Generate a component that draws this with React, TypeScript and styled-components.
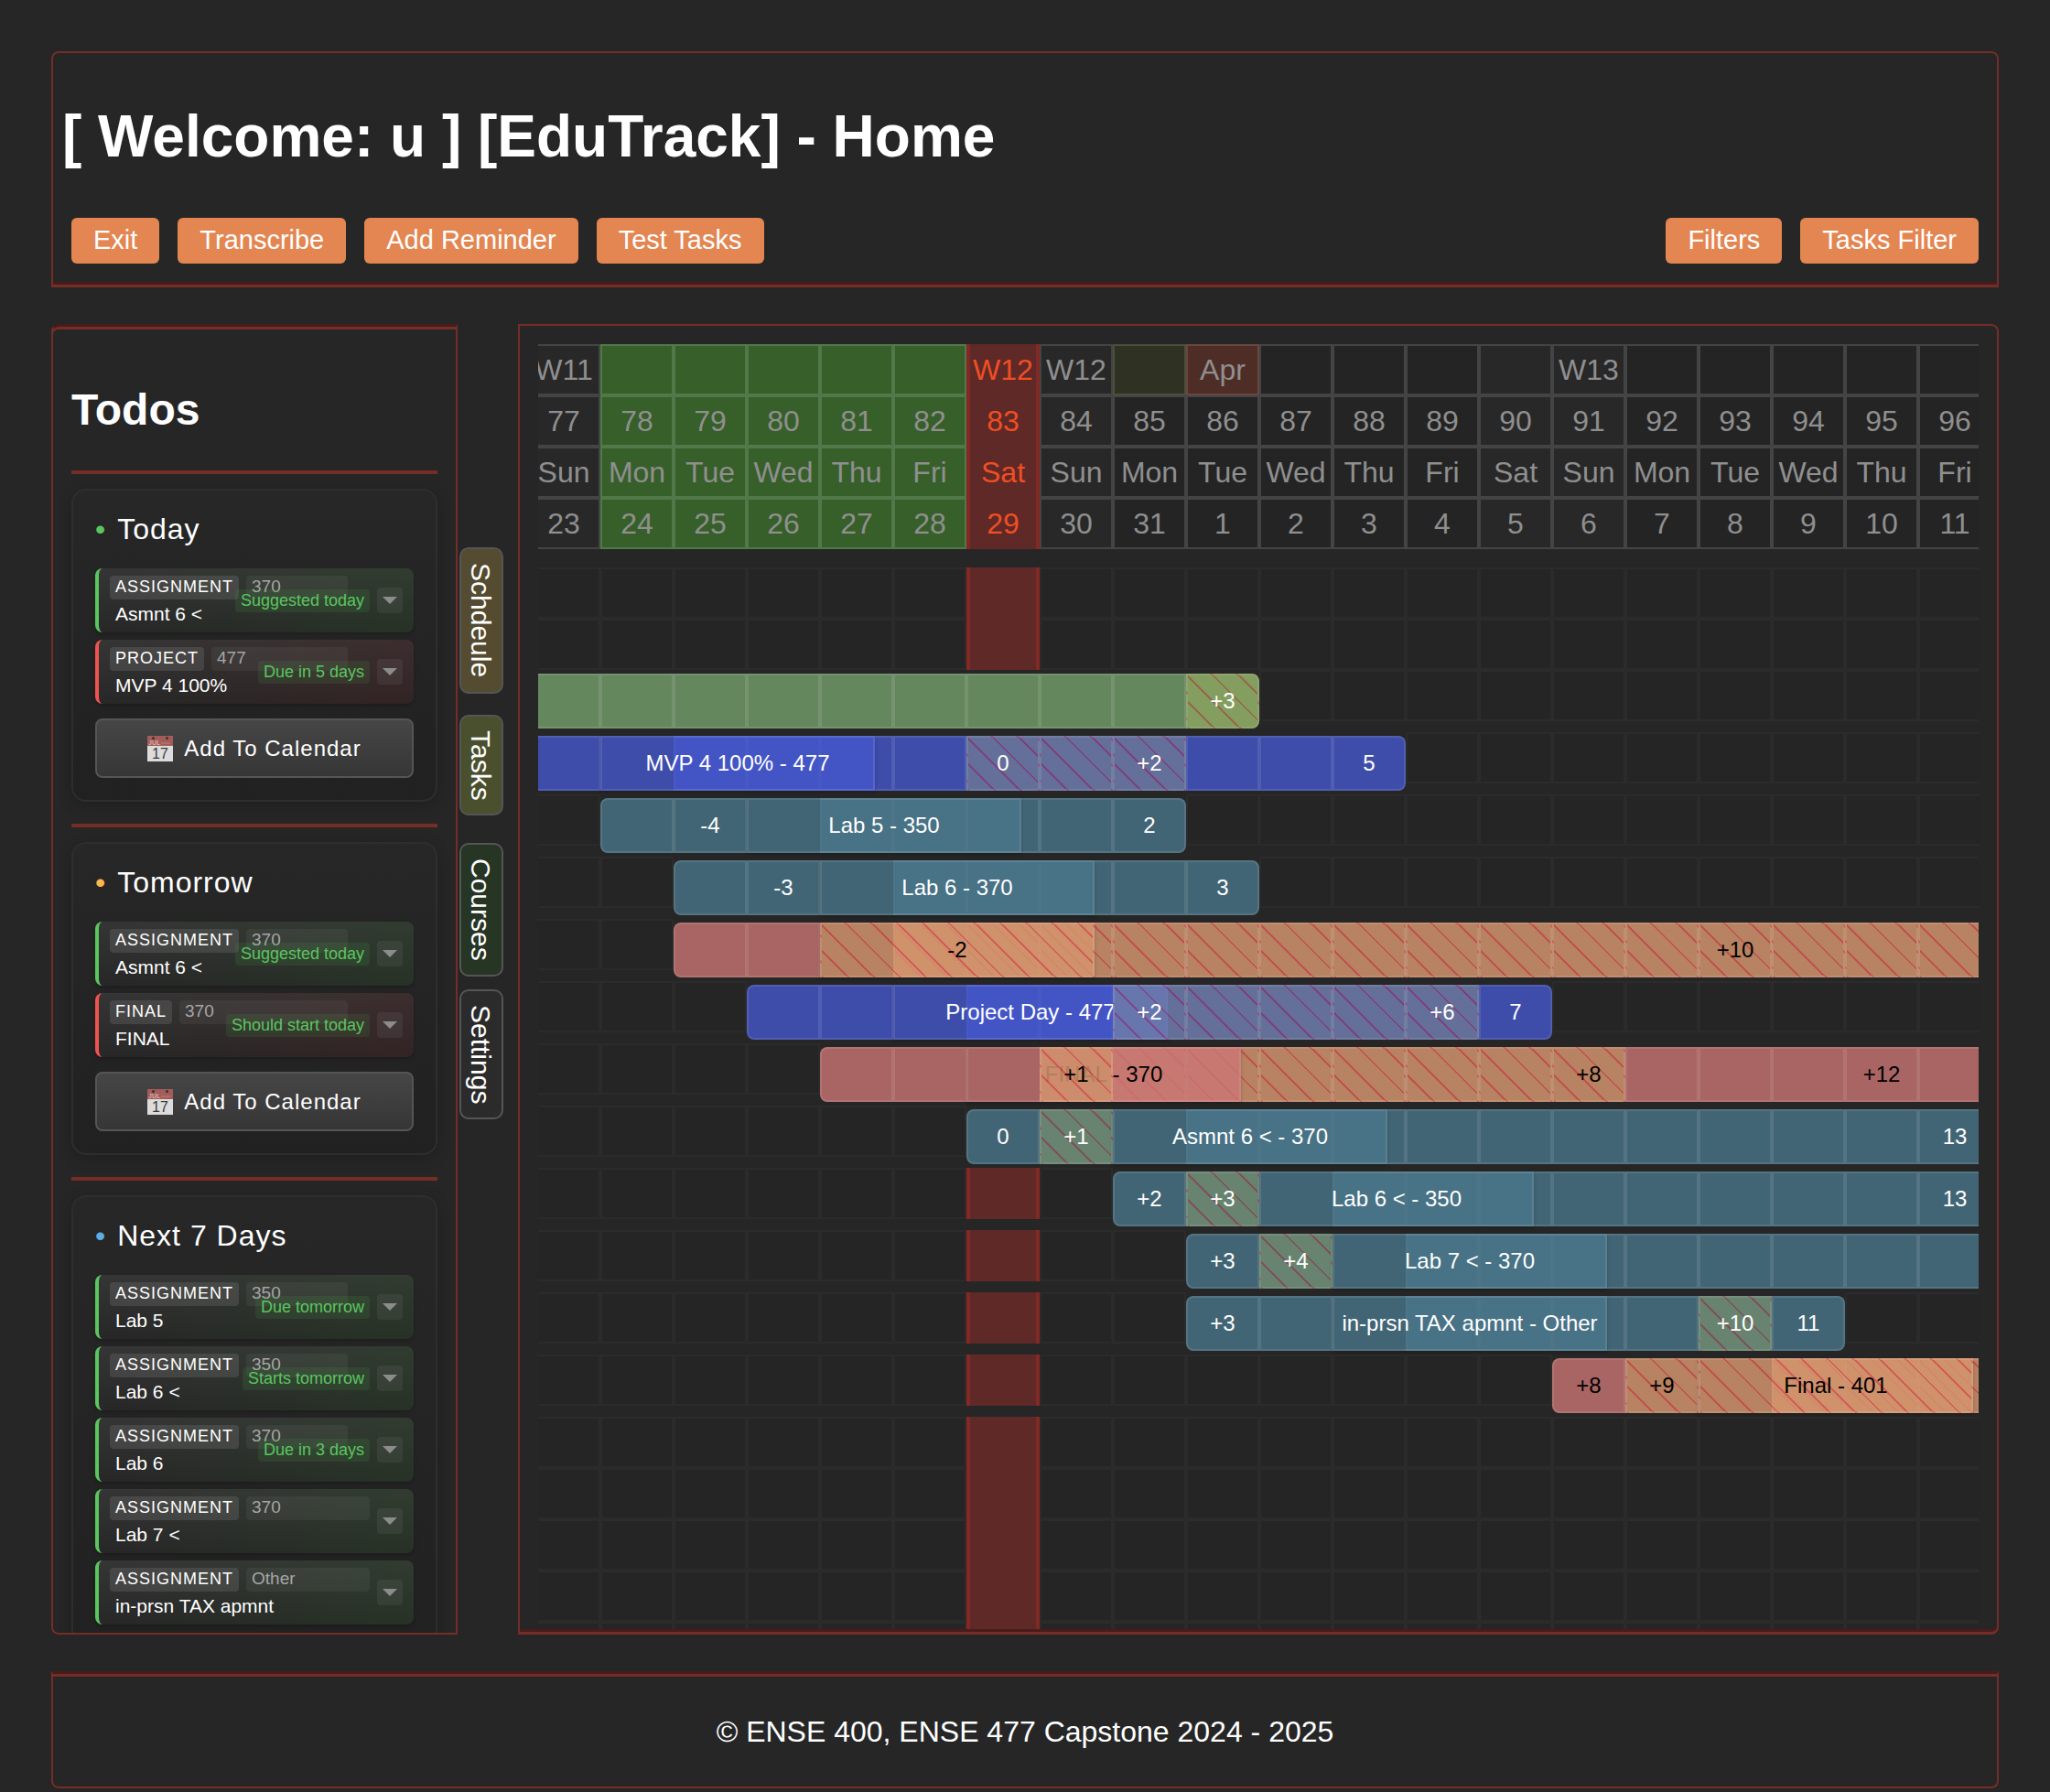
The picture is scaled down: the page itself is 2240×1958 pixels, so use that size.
import React from "react";
import styled, { createGlobalStyle, css } from "styled-components";

const RED = "#752d28";
const DARK_RED = "#471c1a";
const FONT = '"Liberation Sans", Arial, sans-serif';
const COLUMNS = 20;

const GlobalStyle = createGlobalStyle`
  *, *::before, *::after { box-sizing: border-box; }
  html, body { margin: 0; background: #262626; }
  body { color: #fff; font-family: ${FONT}; font-size: 32px; }
  button { font-family: inherit; color: inherit; cursor: pointer; }
`;

/* ---------- page frame ---------- */

/* Two-tone grooved edges: dark on the upper half, red on the lower half. */
const grooveTop = css`
  border-top: 3px solid ${DARK_RED};
  box-shadow: inset 0 3px 0 ${RED};
`;

const grooveBottom = css`
  border-bottom: 3px solid ${RED};
  box-shadow: inset 0 -3px 0 ${DARK_RED};
`;

const Page = styled.div`
  display: flex;
  flex-direction: column;
  gap: 40px;
  height: 100vh;
  padding: 56px 56px 4px;
`;

const Header = styled.header`
  padding: 0 20px 23px;
  border: 2px solid ${RED};
  border-radius: 8px 8px 0 0;
  ${grooveBottom}
`;

const Title = styled.h1`
  margin: 54px -10px 52px;
  font-size: 64px;
  line-height: 74px;
`;

const Toolbar = styled.nav`
  display: flex;
  justify-content: space-between;
`;

const ButtonGroup = styled.div`
  display: flex;
  gap: 20px;
`;

const ToolButton = styled.button`
  padding: 8px 24px 10px;
  border: 0;
  border-radius: 6px;
  background: #e38652;
  font-size: 29px;
  line-height: 32px;
`;

const Workspace = styled.div`
  display: flex;
  flex: 1;
  min-height: 0;
`;

const Footer = styled.footer`
  padding: 45px 20px 42px;
  border: 2px solid ${RED};
  border-radius: 0 0 8px 8px;
  ${grooveTop}
  font-size: 32px;
  line-height: 36px;
  text-align: center;
`;

/* ---------- todos ---------- */

const Sidebar = styled.aside`
  width: 444px;
  flex: none;
  overflow: hidden;
  padding: 3px 20px 0;
  border: 2px solid ${RED};
  border-radius: 8px 0 0 8px;
  ${grooveTop}
`;

const SidebarTitle = styled.h2`
  margin: 61px 0 39px;
  font-size: 48px;
  line-height: 54px;
`;

const Rule = styled.hr`
  height: 4px;
  margin: 0 0 16px;
  border: 0;
  background: ${RED};
`;

const Card = styled.section`
  margin-bottom: 24px;
  padding: 24px;
  border: 2px solid #2e2e2e;
  border-radius: 16px;
  background: linear-gradient(180deg, #272727, #212121);
  box-shadow: 0 4px 16px rgba(0, 0, 0, 0.2);
`;

const CardTitle = styled.h3<{ $dot: string }>`
  display: flex;
  gap: 12px;
  margin: 0 0 24px;
  font-size: 32px;
  font-weight: 400;
  line-height: 37px;
  letter-spacing: 1px;
  &::before {
    content: "•";
    color: ${(p) => p.$dot};
  }
`;

const TodoList = styled.ul`
  display: flex;
  flex-direction: column;
  gap: 8px;
  margin: 0 0 16px;
  padding: 0;
  list-style: none;
`;

const TodoItem = styled.li<{ $urgent?: boolean }>`
  position: relative;
  display: flex;
  align-items: center;
  gap: 8px;
  padding: 8px 12px;
  border-left: 4px solid ${(p) => (p.$urgent ? "#ef5350" : "#5bc560")};
  border-radius: 8px;
  background:
    linear-gradient(
      100deg,
      transparent 10%,
      ${(p) => (p.$urgent ? "rgba(80, 28, 28, 0.27)" : "rgba(40, 76, 36, 0.27)")} 90%
    ),
    linear-gradient(180deg, #353535, #272727);
  box-shadow: 0 2px 4px rgba(0, 0, 0, 0.2);
`;

const TodoInfo = styled.div<{ $narrow: boolean }>`
  flex: 1;
  padding-right: ${(p) => (p.$narrow ? "24px" : "0")};
`;

const Tags = styled.div`
  display: flex;
  gap: 8px;
  margin-bottom: 4px;
  line-height: 20px;
`;

const TypeTag = styled.span`
  padding: 2px 6px 4px;
  border-radius: 4px;
  background: rgba(255, 255, 255, 0.1);
  font-size: 18px;
  letter-spacing: 1px;
  text-transform: uppercase;
`;

const CourseTag = styled.span`
  flex: 1;
  padding: 2px 6px 4px;
  border-radius: 4px;
  background: rgba(255, 255, 255, 0.05);
  color: #a6a6a6;
  font-size: 19px;
`;

const TodoName = styled.div`
  padding-left: 6px;
  font-size: 21px;
  line-height: 24px;
`;

const Status = styled.span`
  position: absolute;
  top: 23px;
  right: 48px;
  padding: 2px 6px;
  border-radius: 4px;
  background: rgba(76, 175, 80, 0.13);
  color: #5bc560;
  font-size: 18px;
  line-height: 21px;
`;

const ExpandButton = styled.button`
  display: grid;
  place-items: center;
  width: 28px;
  height: 28px;
  padding: 0;
  border: 0;
  border-radius: 4px;
  background: rgba(255, 255, 255, 0.06);
`;

const CalendarButton = styled.button`
  display: flex;
  align-items: center;
  justify-content: center;
  gap: 12px;
  width: 100%;
  padding: 16px;
  border: 2px solid #555;
  border-radius: 8px;
  background: linear-gradient(180deg, #464646, #363636);
  font-size: 24px;
  line-height: 29px;
  letter-spacing: 1px;
`;

/* ---------- side tabs ---------- */

const Tabs = styled.nav`
  display: grid;
  grid-auto-rows: 158px;
  align-content: start;
  align-items: center;
  padding: 245px 16px 0 2px;
`;

const Tab = styled.button<{ $color: string }>`
  padding: 15px 6px 15px 4px;
  border: 2px solid #555;
  border-radius: 10px;
  background: ${(p) => p.$color};
  font-size: 30px;
  line-height: 34px;
  writing-mode: vertical-rl;
`;

/* ---------- schedule ---------- */

const Schedule = styled.main`
  flex: 1;
  min-width: 0;
  padding: 20px 20px 3px;
  border: 2px solid ${RED};
  border-radius: 0 8px 8px 0;
  ${grooveBottom}
`;

const Viewport = styled.div`
  height: 100%;
  overflow: hidden;
`;

/* The timeline is scrolled a little way into its first day. */
const Timeline = styled.div`
  width: max-content;
  margin-left: -12px;
`;

const DayTable = styled.table`
  width: 1600px;
  margin-bottom: 20px;
  border-spacing: 0;
  table-layout: fixed;
`;

type Tone = "weekday" | "weekend" | "reading" | "today" | "mark" | "month";

const tones: Record<Tone, ReturnType<typeof css>> = {
  weekday: css`
    background: #242424;
    border-color: #444;
  `,
  weekend: css`
    background: #282828;
    border-color: #444;
  `,
  reading: css`
    background: #375f29;
    border-color: #527749;
  `,
  today: css`
    background: #5f2927;
    border-color: #842824;
    border-width: 0 4px;
    color: #f04e23;
  `,
  mark: css`
    background: #2f3223;
    border-color: #4a4e3b;
  `,
  month: css`
    background: #4f2d27;
    border-color: #6a4641;
  `,
};

const DayCell = styled.td<{ $tone: Tone }>`
  height: 56px;
  padding: 0;
  border: 2px solid;
  color: #8f8f8f;
  font-size: 32px;
  line-height: 36px;
  text-align: center;
  white-space: nowrap;
  ${(p) => tones[p.$tone]}
`;

const Row = styled.div<{ $tall?: boolean }>`
  display: grid;
  grid-template-columns: repeat(${COLUMNS}, 80px);
  height: ${(p) => (p.$tall ? "68px" : "56px")};
`;

const EmptyCell = styled.div<{ $today: boolean }>`
  height: 56px;
  border: 2px solid #2b2b2b;
  background: #252525;
  ${(p) => p.$today && tones.today}
`;

const hatch = css`
  background-image: repeating-linear-gradient(
    45deg,
    rgba(236, 236, 90, 0.22) 0 18px,
    rgba(236, 45, 42, 0.36) 18px 20px
  );
`;

const BarCell = styled.div<{
  $color: string;
  $dark: boolean;
  $hatched: boolean;
  $labelled: boolean;
  $wide: boolean;
  $first: boolean;
  $last: boolean;
}>`
  position: relative;
  z-index: ${(p) => (p.$labelled ? 1 : 0)};
  display: flex;
  align-items: center;
  justify-content: center;
  width: ${(p) => (p.$wide ? "300px" : "80px")};
  height: 60px;
  margin-top: 4px;
  border: 2px solid rgba(255, 255, 255, 0.1);
  border-radius: ${(p) =>
    `${p.$first ? "8px" : "0"} ${p.$last ? "8px 8px" : "0 0"} ${p.$first ? "8px" : "0"}`};
  background-color: ${(p) => p.$color};
  box-shadow: ${(p) => (p.$wide ? "0 2px 4px rgba(0, 0, 0, 0.2)" : "none")};
  color: ${(p) => (p.$dark ? "#000" : "#fff")};
  font-size: 24px;
  white-space: nowrap;
  ${(p) => p.$hatched && hatch}
`;

/* ---------- data ---------- */

interface Todo {
  type: string;
  course: string;
  name: string;
  status?: string;
  urgent?: boolean;
}

const groups: { title: string; dot: string; addable: boolean; todos: Todo[] }[] = [
  {
    title: "Today",
    dot: "#5bc560",
    addable: true,
    todos: [
      { type: "Assignment", course: "370", name: "Asmnt 6 <", status: "Suggested today" },
      { type: "Project", course: "477", name: "MVP 4 100%", status: "Due in 5 days", urgent: true },
    ],
  },
  {
    title: "Tomorrow",
    dot: "#ffb74d",
    addable: true,
    todos: [
      { type: "Assignment", course: "370", name: "Asmnt 6 <", status: "Suggested today" },
      { type: "Final", course: "370", name: "FINAL", status: "Should start today", urgent: true },
    ],
  },
  {
    title: "Next 7 Days",
    dot: "#5dade2",
    addable: false,
    todos: [
      { type: "Assignment", course: "350", name: "Lab 5", status: "Due tomorrow" },
      { type: "Assignment", course: "350", name: "Lab 6 <", status: "Starts tomorrow" },
      { type: "Assignment", course: "370", name: "Lab 6", status: "Due in 3 days" },
      { type: "Assignment", course: "370", name: "Lab 7 <" },
      { type: "Assignment", course: "Other", name: "in-prsn TAX apmnt" },
    ],
  },
];

const tabs = [
  { label: "Schdeule", color: "#544b30" },
  { label: "Tasks", color: "#4a502e" },
  { label: "Courses", color: "#273525" },
  { label: "Settings", color: "#2b2b2b" },
];

const TODAY = 6;
const WEEKDAYS = ["Sun", "Mon", "Tue", "Wed", "Thu", "Fri", "Sat"];
const weekLabels: Record<number, string> = { 0: "W11", 6: "W12", 7: "W12", 9: "Apr", 14: "W13" };
const days = Array.from({ length: COLUMNS }, (_, i) => i);

const toneOf = (day: number, row: number): Tone => {
  if (day === TODAY) return "today";
  if (day >= 1 && day <= 5) return "reading";
  if (row === 0 && day === 8) return "mark";
  if (row === 0 && day === 9) return "month";
  return day % 7 === 0 || day % 7 === 6 ? "weekend" : "weekday";
};

const dayRows: ((day: number) => string | number)[] = [
  (d) => weekLabels[d] ?? "",
  (d) => 77 + d,
  (d) => WEEKDAYS[d % 7],
  (d) => (d < 9 ? 23 + d : d - 8),
];

const GREEN = "rgba(118, 160, 109, 0.8)";
const BLUE = "rgba(69, 87, 204, 0.8)";
const TEAL = "rgba(74, 118, 138, 0.8)";
const ROSE = "rgba(202, 118, 116, 0.8)";

interface Bar {
  color: string;
  from: number;
  to: number;
  hatched?: [number, number];
  title?: [number, string];
  labels: Record<number, string>;
}

/* -1 and COLUMNS stand for bars that run on past the visible days. */
const bars: Bar[] = [
  { color: GREEN, from: -1, to: 9, hatched: [9, 9], labels: { 9: "+3" } },
  { color: BLUE, from: -1, to: 11, hatched: [6, 8], title: [1, "MVP 4 100% - 477"], labels: { 6: "0", 8: "+2", 11: "5" } },
  { color: TEAL, from: 1, to: 8, title: [3, "Lab 5 - 350"], labels: { 2: "-4", 8: "2" } },
  { color: TEAL, from: 2, to: 9, title: [4, "Lab 6 - 370"], labels: { 3: "-3", 9: "3" } },
  { color: ROSE, from: 2, to: COLUMNS, hatched: [4, COLUMNS], title: [4, "-2"], labels: { 16: "+10" } },
  { color: BLUE, from: 3, to: 13, hatched: [8, 12], title: [5, "Project Day - 477"], labels: { 8: "+2", 12: "+6", 13: "7" } },
  { color: ROSE, from: 4, to: COLUMNS, hatched: [7, 14], title: [6, "FINAL - 370"], labels: { 7: "+1", 14: "+8", 18: "+12" } },
  { color: TEAL, from: 6, to: COLUMNS, hatched: [7, 7], title: [8, "Asmnt 6 < - 370"], labels: { 6: "0", 7: "+1", 19: "13" } },
  { color: TEAL, from: 8, to: COLUMNS, hatched: [9, 9], title: [10, "Lab 6 < - 350"], labels: { 8: "+2", 9: "+3", 19: "13" } },
  { color: TEAL, from: 9, to: COLUMNS, hatched: [10, 10], title: [11, "Lab 7 < - 370"], labels: { 9: "+3", 10: "+4" } },
  { color: TEAL, from: 9, to: 17, hatched: [16, 16], title: [11, "in-prsn TAX apmnt - Other"], labels: { 9: "+3", 16: "+10", 17: "11" } },
  { color: ROSE, from: 14, to: COLUMNS, hatched: [15, COLUMNS], title: [16, "Final - 401"], labels: { 14: "+8", 15: "+9" } },
];

/* ---------- parts ---------- */

const CalendarIcon = () => (
  <svg width="28" height="28" viewBox="0 0 28 28" aria-hidden="true">
    <rect width="28" height="28" fill="#dcdcdc" />
    <rect width="28" height="11" fill="#a35c5a" />
    <circle cx="6.5" cy="2.5" r="1.5" fill="#3b3030" />
    <circle cx="21.5" cy="2.5" r="1.5" fill="#3b3030" />
    <text x="1" y="9.5" fontSize="7" fontWeight="700" fill="#d9a9a7" fontFamily={FONT} letterSpacing="0">
      JUL
    </text>
    <path d="M15 8h10" stroke="#b06c69" strokeWidth="2" />
    <text x="14" y="24.5" fontSize="16" fill="#3a3a3a" fontFamily={FONT} textAnchor="middle" letterSpacing="0">
      17
    </text>
  </svg>
);

const TodoRow = ({ type, course, name, status, urgent }: Todo) => (
  <TodoItem $urgent={urgent}>
    <TodoInfo $narrow={Boolean(status)}>
      <Tags>
        <TypeTag>{type}</TypeTag>
        <CourseTag>{course}</CourseTag>
      </Tags>
      <TodoName>{name}</TodoName>
    </TodoInfo>
    {status && <Status>{status}</Status>}
    <ExpandButton aria-label={`Expand ${name}`}>
      <svg width="16" height="8" viewBox="0 0 16 8" aria-hidden="true">
        <path d="M0 0h16L8 8z" fill="#8c8c8c" />
      </svg>
    </ExpandButton>
  </TodoItem>
);

const EmptyRow = () => (
  <Row>
    {days.map((d) => (
      <EmptyCell key={d} $today={d === TODAY} />
    ))}
  </Row>
);

const BarRow = ({ bar }: { bar: Bar }) => (
  <Row $tall>
    {days.map((d) => {
      if (d < bar.from || d > bar.to) return <EmptyCell key={d} $today={d === TODAY} />;
      const wide = bar.title?.[0] === d;
      const text = wide ? bar.title![1] : bar.labels[d];
      const hatched = bar.hatched ? d >= bar.hatched[0] && d <= bar.hatched[1] : false;
      return (
        <BarCell
          key={d}
          $color={bar.color}
          $dark={bar.color === ROSE}
          $hatched={hatched}
          $labelled={Boolean(text)}
          $wide={wide}
          $first={d === bar.from}
          $last={d === bar.to}
        >
          {text}
        </BarCell>
      );
    })}
  </Row>
);

export default function App() {
  return (
    <>
      <GlobalStyle />
      <Page>
        <Header>
          <Title>[ Welcome: u ] [EduTrack] - Home</Title>
          <Toolbar>
            <ButtonGroup>
              <ToolButton>Exit</ToolButton>
              <ToolButton>Transcribe</ToolButton>
              <ToolButton>Add Reminder</ToolButton>
              <ToolButton>Test Tasks</ToolButton>
            </ButtonGroup>
            <ButtonGroup>
              <ToolButton>Filters</ToolButton>
              <ToolButton>Tasks Filter</ToolButton>
            </ButtonGroup>
          </Toolbar>
        </Header>

        <Workspace>
          <Sidebar>
            <SidebarTitle>Todos</SidebarTitle>
            {groups.map((group) => (
              <React.Fragment key={group.title}>
                <Rule />
                <Card>
                  <CardTitle $dot={group.dot}>{group.title}</CardTitle>
                  <TodoList>
                    {group.todos.map((todo) => (
                      <TodoRow key={todo.name} {...todo} />
                    ))}
                  </TodoList>
                  {group.addable && (
                    <CalendarButton>
                      <CalendarIcon />
                      Add To Calendar
                    </CalendarButton>
                  )}
                </Card>
              </React.Fragment>
            ))}
          </Sidebar>

          <Tabs>
            {tabs.map((tab) => (
              <Tab key={tab.label} $color={tab.color}>
                {tab.label}
              </Tab>
            ))}
          </Tabs>

          <Schedule>
            <Viewport>
              <Timeline>
                <DayTable>
                  <tbody>
                    {dayRows.map((valueOf, row) => (
                      <tr key={row}>
                        {days.map((d) => (
                          <DayCell key={d} $tone={toneOf(d, row)}>
                            {valueOf(d)}
                          </DayCell>
                        ))}
                      </tr>
                    ))}
                  </tbody>
                </DayTable>
                <EmptyRow />
                <EmptyRow />
                {bars.map((bar, i) => (
                  <BarRow key={i} bar={bar} />
                ))}
                <EmptyRow />
                <EmptyRow />
                <EmptyRow />
                <EmptyRow />
                <EmptyRow />
              </Timeline>
            </Viewport>
          </Schedule>
        </Workspace>

        <Footer>© ENSE 400, ENSE 477 Capstone 2024 - 2025</Footer>
      </Page>
    </>
  );
}
